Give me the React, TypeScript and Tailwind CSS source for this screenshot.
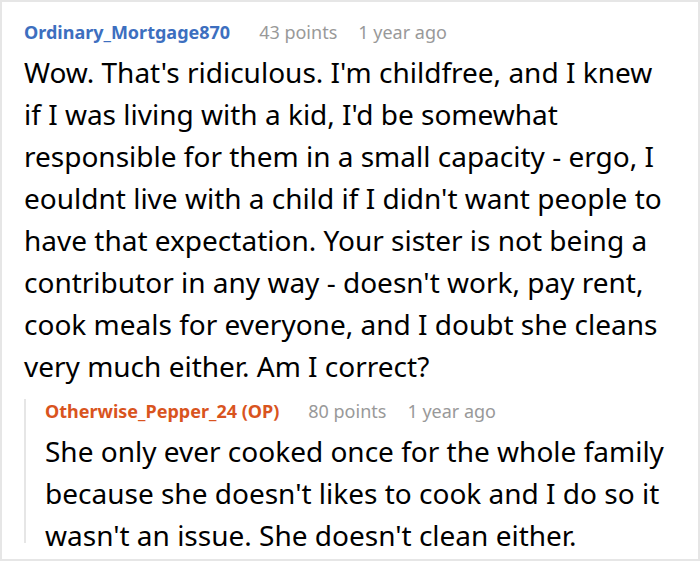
const font = { fontFamily: '"Noto Sans", "Open Sans", sans-serif' };

function Meta({ name, nameClass, points, age }: { name: string; nameClass: string; points: string; age: string }) {
	return (
		<div className="flex items-baseline gap-x-[29px] text-[18px] leading-[24px]">
			<span className={`font-bold ${nameClass}`}>{name}</span>
			<span className="flex gap-x-[21px] text-[#999999]">
				<span>{points}</span>
				<span>{age}</span>
			</span>
		</div>
	);
}

export default function App() {
	return (
		<div style={font} className="h-[562px] w-[700px] overflow-hidden bg-white">
			<div className="h-[561px] border-2 border-[#e6e6e6] pt-[18px] pl-[22px] pr-[33px]">
				<Meta name="Ordinary_Mortgage870" nameClass="text-[#3d6fbf]" points="43 points" age="1 year ago" />
				<p className="mt-[7px] text-[28px] leading-[42px] text-black">
					Wow. That's ridiculous. I'm childfree, and I knew if I was living with a kid, I'd be somewhat responsible for them in a
					small capacity - ergo, I eouldnt live with a child if I didn't want people to have that expectation. Your sister is not
					being a contributor in any way - doesn't work, pay rent, cook meals for everyone, and I doubt she cleans very much
					either. Am I correct?
				</p>

				<div className="mt-[12px] h-[144px] border-l-2 border-[#e6e6e6] pl-[19px]">
					<Meta name="Otherwise_Pepper_24 (OP)" nameClass="text-[#d9541e]" points="80 points" age="1 year ago" />
					<p className="mt-[7px] text-[28px] leading-[42px] text-black">
						She only ever cooked once for the whole family because she doesn't likes to cook and I do so it wasn't an issue. She
						doesn't clean either.
					</p>
				</div>
			</div>
		</div>
	);
}
